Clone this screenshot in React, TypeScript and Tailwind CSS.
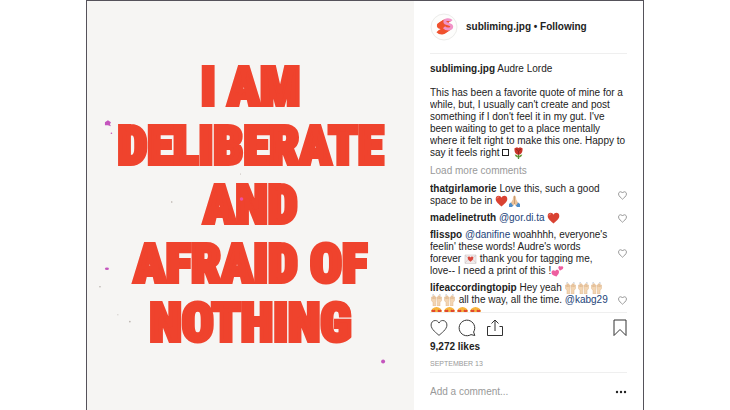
import React from "react";

function Avatar() {
  const curve = "M21.500 8c-2-2.200-7-1.600-6.700 1 .3 2.600 7 1.400 7 4.600 0 3-5.500 3.200-7.800.6";

  return (
    <svg viewBox="0 0 28 28" className="h-7 w-7 shrink-0" aria-hidden="true">
      <circle cx="14" cy="14" r="13" fill="#fdfdfc" stroke="#ececea" />
      <g fill="none" strokeLinejoin="round" strokeWidth="2.800">
        <g stroke="#f0512d">
          <path d={curve} transform="translate(-6.500 4)" />
          <path d={curve} transform="translate(-5 3)" />
          <path d={curve} transform="translate(-3.500 2)" />
          <path d={curve} transform="translate(-2 1)" />
        </g>
        <path d={curve} stroke="#f193c8" />
      </g>
    </svg>
  );
}

function HeartShape({ className }: { className: string }) {
  return (
    <svg
      viewBox="0 0 20 20"
      className={className}
      fill="none"
      stroke="currentColor"
      strokeLinejoin="round"
      aria-hidden="true"
    >
      <path d="M10 18.200C7.500 15.800 1.200 11.600 1.200 6.700 1.200 3.700 3.300 1.700 5.800 1.700c2 0 3.400 1.100 4.200 2.800.8-1.700 2.200-2.800 4.200-2.800 2.500 0 4.600 2 4.600 5 0 4.900-6.300 9.100-8.800 11.500z" />
    </svg>
  );
}

const emojiClass = "-my-px inline-block h-3 w-[13px] align-[-2px]";

function RedHeart() {
  return (
    <svg viewBox="0 0 13 12" className={emojiClass} role="img" aria-label="red heart">
      <path d="M6.500 11.500C4.500 9.500.7 7.300.7 4 .7 2 2 .8 3.600.8c1.300 0 2.300.7 2.900 1.900C7.100 1.500 8.100.8 9.400.8c1.600 0 2.900 1.200 2.900 3.200 0 3.300-3.800 5.500-5.800 7.500z" fill="#d94232" />
      <path d="M2 3.500C2.200 2.400 3 1.900 4 2" stroke="#ee8b7a" fill="none" />
    </svg>
  );
}

function Rose() {
  return (
    <svg viewBox="0 0 13 12" className={emojiClass} role="img" aria-label="rose">
      <path d="M6.500 6v6" stroke="#4e8a35" strokeWidth="1.300" />
      <path d="M6.500 10.500C4 10.500 3 9 2.700 7.500c2 .2 3.300 1 3.800 3 .5-2 1.800-2.800 3.800-3-.3 1.500-1.300 3-3.800 3z" fill="#6b9a3c" />
      <path d="M2.500 1.200L5 .3l1.500.7L8 .3l2.500.9c.3 3-.5 6-4 6.500-3.500-.5-4.300-3.500-4-6.500z" fill="#c8352a" />
      <path d="M4 2l2.500 2L9 2M6.500 4v3" stroke="#86231e" strokeWidth=".8" fill="none" />
    </svg>
  );
}

function Pray() {
  return (
    <svg viewBox="0 0 13 12" className={emojiClass} role="img" aria-label="folded hands">
      <path d="M1 9l2.500-2 2 3.200L4 12H1zM12 9L9.500 7l-2 3.200L9 12h3z" fill="#4f8fca" />
      <path d="M6.300.5C5 .8 4.900 3 4.800 4.500L3 7.800l2.200 3 1.300-1.600 1.300 1.600 2.200-3-1.800-3.300C8.100 3 8 .8 6.700.5z" fill="#ecc39a" />
      <path d="M6.500 1v8" stroke="#b98a60" strokeWidth=".7" />
    </svg>
  );
}

function LoveLetter() {
  return (
    <svg viewBox="0 0 13 12" className={emojiClass} role="img" aria-label="love letter">
      <path d="M1 2h11v8.500H1z" fill="#f0ecec" stroke="#d6cfcf" strokeWidth=".7" />
      <path d="M1 2.500l5.500 4 5.500-4M1 10l3.500-4M12 10L8.500 6" stroke="#c9c0c0" strokeWidth=".6" fill="none" />
      <path d="M6.500 8.800C5.500 7.700 3.700 6.800 3.700 5c0-1.800 2.200-2 2.800-.5.600-1.500 2.800-1.300 2.800.5 0 1.800-1.800 2.700-2.800 3.800z" fill="#d9473c" />
    </svg>
  );
}

function TwoHearts() {
  return (
    <svg viewBox="0 0 13 12" className={emojiClass} role="img" aria-label="two hearts">
      <path d="M5.600 11.500C3.500 10.800.3 10 .5 7.200.7 5 3.200 4.500 4.200 6.300 5 4.300 7.600 4.400 8 6.500c.3 2-1.500 3.500-2.400 5z" fill="#ee5fa0" />
      <path d="M9 5.700C8.600 4.500 6.900 3.500 7.400 1.900 7.900.6 9.500.6 9.900 1.800c.8-1 2.500-.4 2.400 1C12.200 4.400 10.200 4.800 9 5.700z" fill="#ee5fa0" />
    </svg>
  );
}

function RaisedHands() {
  return (
    <svg viewBox="0 0 13 12" className={emojiClass} role="img" aria-label="raised hands">
      <path d="M1.500 3v3.500L3 8.500V12h2.700V8.500l.4-5.300-.9-.2-.3 2V2l-.9-.2L3.700 5V1.700l-.9.100V5L2.300 3zM11.500 3v3.500L10 8.500V12H7.300V8.500l-.4-5.300.9-.2.3 2V2l.9-.2.3 3.200V1.700l.9.100V5l.5-2z" fill="#f3d5b2" stroke="#dfb78c" strokeWidth=".5" />
      <path d="M2 1.200L4 .4M11 1.200L9 .4" stroke="#b9c4d4" strokeWidth=".7" />
    </svg>
  );
}

function HeartEyes() {
  return (
    <svg viewBox="0 0 13 12" className={emojiClass} role="img" aria-label="heart eyes">
      <circle cx="6.500" cy="6.500" r="5.500" fill="#f7b53c" />
      <path d="M3.500 7L1.500 5c-.3-1.500 1.400-1.700 2-.7C4.300 3.400 5.700 4 5.300 5.400zM9.500 7l2-2c.3-1.500-1.400-1.700-2-.7C8.700 3.400 7.300 4 7.700 5.400z" fill="#e0442f" />
      <path d="M3.500 8h6c-.5 2.500-5.500 2.500-6 0z" fill="#7a4420" />
    </svg>
  );
}

function Mention({ name }: { name: string }) {
  return (
    <a href={`#${name}`} className="text-[#1d4379]">
      @{name}
    </a>
  );
}

interface CommentProps {
  user: string;
  children: React.ReactNode;
}

function Comment({ user, children }: CommentProps) {
  return (
    <li className="flex items-center justify-between">
      <p className="whitespace-nowrap">
        <a href={`#${user}`} className="font-bold">
          {user}
        </a>{" "}
        {children}
      </p>
      <button type="button" aria-label={`Like comment by ${user}`} className="shrink-0 text-[#8e8e8e]">
        <HeartShape className="h-[9px] w-[9px] stroke-2" />
      </button>
    </li>
  );
}

function Poster() {
  return (
    <section className="relative flex flex-1 items-center justify-center overflow-hidden bg-[#f6f5f3]">
      <h1 className="text-center font-['Roboto_Condensed','Liberation_Sans_Narrow','Liberation_Sans',sans-serif] text-[53px] leading-[59px] font-black whitespace-nowrap text-[#ef432d] [-webkit-text-stroke:4px_#ef432d]">
        I AM
        <br />
        DELIBERATE
        <br />
        AND
        <br />
        AFRAID OF
        <br />
        NOTHING
      </h1>
      {/* paint specks */}
      <svg viewBox="0 0 328 409" className="absolute inset-0 h-full w-full" aria-hidden="true">
        <g fill="#c455bd">
          <path d="M18 121l3-2 3 2-1 2 1 2-3-1-3 0z" />
          <circle cx="24.500" cy="132" r=".8" />
          <ellipse cx="20" cy="268" rx="2" ry="1.300" />
          <circle cx="297" cy="361" r="2" />
        </g>
        <circle cx="155" cy="198" r="1.800" fill="#ef4fa0" />
        <g fill="#b5aea9">
          <circle cx="85" cy="201" r=".8" />
          <circle cx="13" cy="286" r=".8" />
          <circle cx="43" cy="321" r=".8" />
          <circle cx="31" cy="314" r=".5" />
          <circle cx="154" cy="173" r=".5" />
        </g>
      </svg>
    </section>
  );
}

export default function App() {
  return (
    <main className="min-h-screen bg-white font-['Liberation_Sans',Arial,sans-serif] text-[10px] leading-3 text-[#222]">
      <article className="mx-auto flex h-screen w-full max-w-[558px] border-x border-t border-[#55525a]">
        <Poster />

        <aside className="flex w-[229px] flex-col px-4">
          <header className="flex h-[53px] items-center gap-2 border-b border-[#efefef] font-bold">
            <Avatar />
            <p>
              <a href="#subliming.jpg">subliming.jpg</a> •{" "}
              <button type="button" className="font-bold">
                Following
              </button>
            </p>
          </header>

          <div className="min-h-0 flex-1 overflow-hidden pt-[9px]">
            <p>
              <a href="#subliming.jpg" className="font-bold">
                subliming.jpg
              </a>{" "}
              Audre Lorde
            </p>
            <p className="mt-3 whitespace-nowrap">
              This has been a favorite quote of mine for a
              <br />
              while, but, I usually can't create and post
              <br />
              something if I don't feel it in my gut. I've
              <br />
              been waiting to get to a place mentally
              <br />
              where it felt right to make this one. Happy to
              <br />
              say it feels right <span className="inline-block h-[7px] w-[7px] border border-[#222]" /> <Rose />
            </p>
            <button type="button" className="mt-1.5 mb-1.5 block text-[#999]">
              Load more comments
            </button>
            <ul className="flex flex-col gap-[5px]">
              <Comment user="thatgirlamorie">
                Love this, such a good
                <br />
                space to be in <RedHeart />
                <Pray />
              </Comment>
              <Comment user="madelinetruth">
                <Mention name="gor.di.ta" /> <RedHeart />
              </Comment>
              <Comment user="flisspo">
                <Mention name="danifine" /> woahhhh, everyone's
                <br />
                feelin' these words! Audre's words
                <br />
                forever <LoveLetter /> thank you for tagging me,
                <br />
                love-- I need a print of this !<TwoHearts />
              </Comment>
              <Comment user="lifeaccordingtopip">
                Hey yeah <RaisedHands />
                <RaisedHands />
                <RaisedHands />
                <br />
                <RaisedHands />
                <RaisedHands /> all the way, all the time. <Mention name="kabg29" />
                <br />
                <HeartEyes />
                <HeartEyes />
                <HeartEyes />
                <HeartEyes />
              </Comment>
            </ul>
          </div>

          <footer className="border-t border-[#efefef] pt-1.5">
            <div className="flex items-center gap-2.5 text-[#333]">
              <button type="button" aria-label="Like">
                <HeartShape className="h-[18px] w-[18px]" />
              </button>
              <button type="button" aria-label="Comment">
                <svg viewBox="0 0 18 18" className="h-[18px] w-[18px]" fill="none" stroke="currentColor">
                  <path d="M15.600 13A7.800 7.800 0 1 0 13 15.600l3.800.9z" strokeLinejoin="round" />
                </svg>
              </button>
              <button type="button" aria-label="Share">
                <svg viewBox="0 0 18 18" className="h-[18px] w-[18px]" fill="none" stroke="currentColor">
                  <path d="M4.500 7.500H1.500v9h15v-9h-3M9 12V1M5.500 4.500L9 1l3.500 3.500" />
                </svg>
              </button>
              <button type="button" aria-label="Save" className="ml-auto">
                <svg viewBox="0 0 14 18" className="h-[18px] w-[14px]" fill="none" stroke="currentColor">
                  <path d="M1 1h12v15.500l-6-6-6 6z" />
                </svg>
              </button>
            </div>
            <p className="mt-1 font-bold">9,272 likes</p>
            <time className="mt-[5px] block text-[7px] leading-3 text-[#999]">SEPTEMBER 13</time>
            <div className="mt-0.5 flex h-[38px] items-center justify-between border-t border-[#efefef]">
              <input
                type="text"
                aria-label="Add a comment"
                placeholder="Add a comment..."
                className="min-w-0 flex-1 outline-none placeholder:text-[#999]"
              />
              <button type="button" aria-label="More options">
                <svg viewBox="0 0 12 4" className="h-1 w-3" fill="#222">
                  <circle cx="2" cy="2" r="1.200" />
                  <circle cx="6" cy="2" r="1.200" />
                  <circle cx="10" cy="2" r="1.200" />
                </svg>
              </button>
            </div>
          </footer>
        </aside>
      </article>
    </main>
  );
}
